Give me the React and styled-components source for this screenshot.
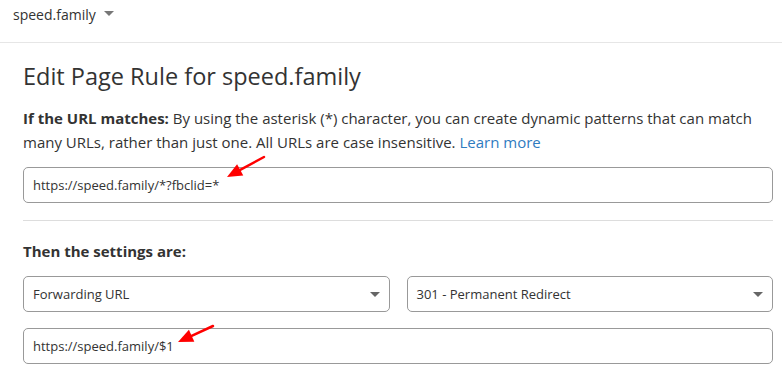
import React from "react";
import styled, { createGlobalStyle } from "styled-components";

const GlobalStyle = createGlobalStyle`
  html, body {
    margin: 0;
    padding: 0;
    background: #fff;
  }
  body {
    font-family: "Open Sans", "Noto Sans", sans-serif;
    color: #333;
  }
`;

const Page = styled.div`
  width: 782px;
  height: 374px;
  overflow: hidden;
  position: relative;
`;

const TopBar = styled.div`
  height: 43px;
  border-bottom: 1px solid #e6e6e6;
  display: flex;
  align-items: center;
  padding: 0 13px;
  box-sizing: border-box;
`;

const ZoneName = styled.span`
  font-size: 14px;
  color: #333;
  display: flex;
  align-items: center;
  gap: 8px;
  margin-top: -14px;
`;

const Caret = styled.span`
  width: 0;
  height: 0;
  border-left: 5px solid transparent;
  border-right: 5px solid transparent;
  border-top: 5px solid #777;
  margin-top: -2px;
`;

const Content = styled.div`
  padding: 0 9px 0 23px;
`;

const Title = styled.h1`
  margin: 17px 0 0;
  font-size: 23.5px;
  font-weight: 400;
  line-height: 32px;
  color: #333;
`;

const Description = styled.p`
  margin: 14px 0 0;
  font-size: 15px;
  line-height: 24px;
`;

const Link = styled.a`
  color: #2f7bbf;
  text-decoration: none;
`;

const Field = styled.div`
  height: 36px;
  border: 1px solid #999;
  border-radius: 5px;
  box-sizing: border-box;
  display: flex;
  align-items: center;
  padding: 0 9px;
  font-size: 13px;
  color: #333;
  margin-top: ${(p) => p.$top || 0}px;
  flex: 1;
`;

const Divider = styled.hr`
  border: 0;
  border-top: 1px solid #ddd;
  margin: 17px 0 0;
`;

const SectionLabel = styled.div`
  font-size: 15px;
  font-weight: 700;
  line-height: 24px;
  margin-top: 18px;
`;

const SelectRow = styled.div`
  display: flex;
  gap: 17px;
  margin-top: 13px;
`;

const Select = styled(Field)`
  justify-content: space-between;
  height: 36px;
`;

const SelectCaret = styled(Caret)`
  border-top-color: #666;
  margin-top: 1px;
`;

const Arrow = styled.svg`
  position: absolute;
  left: 0;
  top: 0;
  overflow: visible;
  pointer-events: none;
`;

function RedArrow({ x1, y1, x2, y2 }) {
  const ang = Math.atan2(y2 - y1, x2 - x1);
  const len = 15;
  const w = 6.5;
  const bx = x2 - Math.cos(ang) * len;
  const by = y2 - Math.sin(ang) * len;
  const px = -Math.sin(ang) * w;
  const py = Math.cos(ang) * w;
  return (
    <Arrow width="782" height="374">
      <line x1={x1} y1={y1} x2={bx} y2={by} stroke="#f00" strokeWidth="2.5" strokeLinecap="round" />
      <polygon
        points={`${x2},${y2} ${bx + px},${by + py} ${bx - px},${by - py}`}
        fill="#f00"
      />
    </Arrow>
  );
}

export default function App() {
  return (
    <>
      <GlobalStyle />
      <Page>
        <TopBar>
          <ZoneName>
            speed.family <Caret />
          </ZoneName>
        </TopBar>
        <Content>
          <Title>Edit Page Rule for speed.family</Title>
          <Description>
            <b>If the URL matches:</b> By using the asterisk (*) character, you can
            create dynamic patterns that can match many URLs, rather than just one.
            All URLs are case insensitive. <Link href="#">Learn more</Link>
          </Description>
          <Field $top={13}>https://speed.family/*?fbclid=*</Field>
          <Divider />
          <SectionLabel>Then the settings are:</SectionLabel>
          <SelectRow>
            <Select>
              Forwarding URL <SelectCaret />
            </Select>
            <Select>
              301 - Permanent Redirect <SelectCaret />
            </Select>
          </SelectRow>
          <Field $top={16}>https://speed.family/$1</Field>
        </Content>
        <RedArrow x1={264} y1={157} x2={227} y2={177} />
        <RedArrow x1={213} y1={326} x2={178} y2={342} />
      </Page>
    </>
  );
}
